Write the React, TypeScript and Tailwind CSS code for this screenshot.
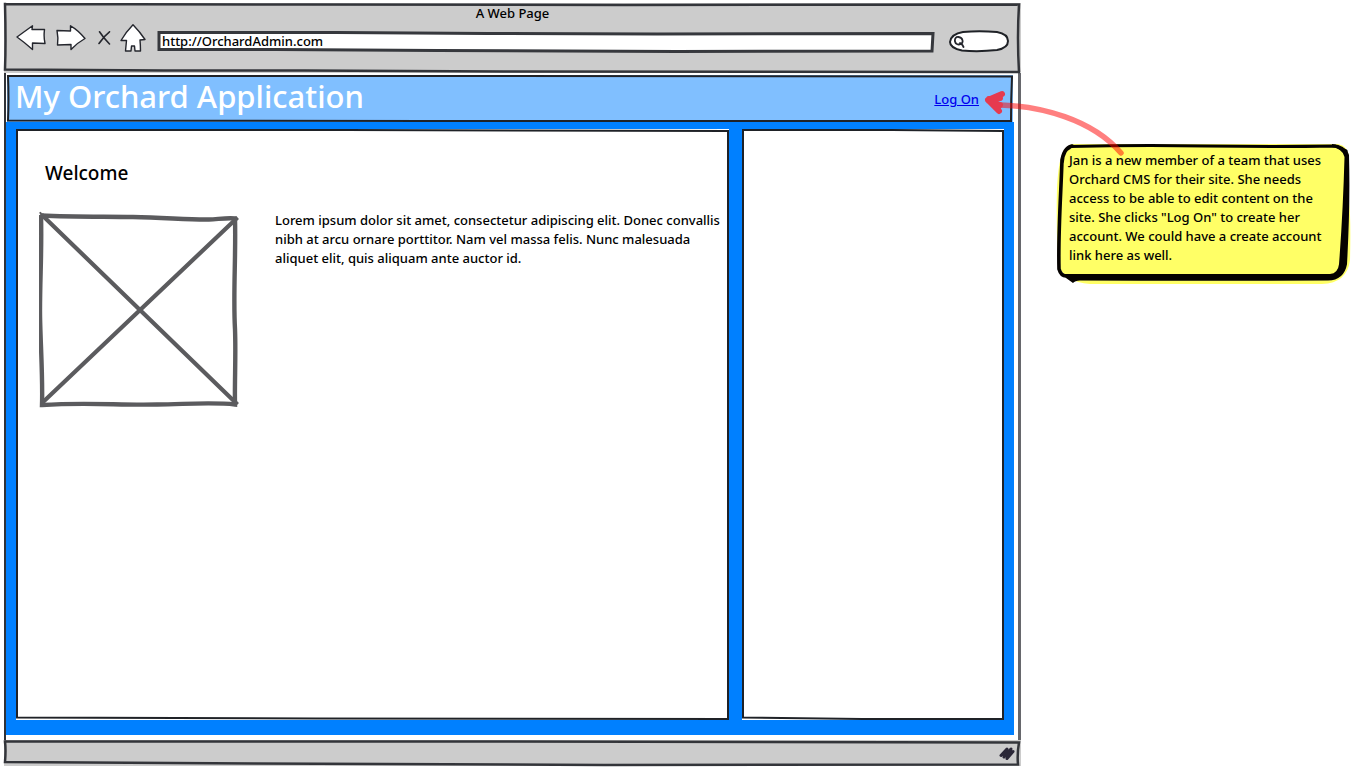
import React from "react";

const welcomeLines = [
  "Lorem ipsum dolor sit amet, consectetur adipiscing elit. Donec convallis",
  "nibh at arcu ornare porttitor. Nam vel massa felis. Nunc malesuada",
  "aliquet elit, quis aliquam ante auctor id.",
];

const noteLines = [
  "Jan is a new member of a team that uses",
  "Orchard CMS for their site. She needs",
  "access to be able to edit content on the",
  'site. She clicks "Log On" to create her',
  "account. We could have a create account",
  "link here as well.",
];

function Lines({ lines }: { lines: string[] }) {
  return (
    <>
      {lines.map((line) => (
        <span key={line} className="block whitespace-nowrap">
          {line}{" "}
        </span>
      ))}
    </>
  );
}

/* Hand-drawn outline stretched over its positioned parent. */
function Sketch({
  box,
  d,
  stroke = "#1f2227",
  width = 2,
  fill = "none",
}: {
  box: string;
  d: string;
  stroke?: string;
  width?: number;
  fill?: string;
}) {
  return (
    <svg
      viewBox={box}
      preserveAspectRatio="none"
      aria-hidden="true"
      className="pointer-events-none absolute inset-0 size-full overflow-visible"
    >
      <path
        d={d}
        fill={fill}
        stroke={stroke}
        strokeWidth={width}
        strokeLinecap="square"
        vectorEffect="non-scaling-stroke"
      />
    </svg>
  );
}

const toolbarStroke = {
  fill: "#fff",
  stroke: "#24262d",
  strokeWidth: 1.4,
  strokeLinejoin: "round" as const,
  strokeLinecap: "round" as const,
};

function BackIcon() {
  return (
    <svg width="30" height="28" viewBox="0 0 30 28" aria-hidden="true">
      <path d="M1 12 Q8 7 16.500 0.800 L16 4.500 L28.500 4.500 Q27.500 12 29 18.500 L16.500 18 L16.500 24.500 Q8 17 1 12Z" {...toolbarStroke} />
    </svg>
  );
}

function ForwardIcon() {
  return (
    <svg width="30" height="28" viewBox="0 0 30 28" aria-hidden="true">
      <path d="M1 5.500 L14.500 6 L14.500 0.800 Q22 5 29 13.500 Q21 18 15 24.500 L15 19.500 L1.500 20 Q2.500 13 1 5.500Z" {...toolbarStroke} />
    </svg>
  );
}

function StopIcon() {
  return (
    <svg width="14" height="16" viewBox="0 0 14 16" aria-hidden="true">
      <path d="M2.500 0.800 Q6.500 7 12.500 13 M12.500 0.800 Q7 5 2 12.500" {...toolbarStroke} fill="none" strokeWidth={1.6} />
    </svg>
  );
}

function HomeIcon() {
  return (
    <svg width="26" height="30" viewBox="0 0 26 30" aria-hidden="true">
      <path
        d="M13 0.800 Q20 8 25 15.500 L20 16 Q20.500 21 20.500 27 L15 27 L14.500 22 L11.500 22 L11 27 L5.500 27 L6.500 16.500 L1 16.500 Q6 8 13 0.800Z"
        {...toolbarStroke}
      />
    </svg>
  );
}

function SearchIcon() {
  return (
    <svg width="13" height="14" viewBox="0 0 13 14" aria-hidden="true" className="relative shrink-0">
      <path
        d="M6.500 3 C4 2.700 2.500 4.500 3 7.500 C3.500 10.500 6.500 11 9 10 C11.700 8.500 11 3.500 6.500 3Z M8 9 L10.500 11 L11.500 13"
        fill="none"
        stroke="#24262d"
        strokeWidth="1.8"
        strokeLinecap="round"
      />
    </svg>
  );
}

function ResizeGrip() {
  return (
    <svg width="17" height="16" viewBox="0 0 17 16" aria-hidden="true" className="relative">
      <path
        d="M2 10.500 L8 4 L5 12 L12 4 L8 13.500 L14 6.500"
        fill="none"
        stroke="#2b2838"
        strokeWidth="3"
        strokeLinecap="round"
        strokeLinejoin="round"
      />
    </svg>
  );
}

function ImagePlaceholder() {
  return (
    <svg width="202" height="197" viewBox="0 0 202 197" role="img" aria-label="Image placeholder" className="shrink-0">
      <g fill="none" stroke="#5b5b5e" strokeLinecap="square" strokeLinejoin="miter">
        <path d="M4 5 L197 192 M197 8 L4 191" strokeWidth="4.200" />
        <path
          d="M2 4.500 C35 6 65 5.500 94 6 C130 7 155 9 170 8.500 C180 8 190 6.500 196 7.500 C197 45 194 85 196 118 C197 145 195.500 170 196 193.500 C175 191 150 193 118 193.500 C80 194.500 50 191 3 194 C4 165 1 125 1 100 C1 65 3 40 2 4Z"
          strokeWidth="4.400"
        />
        <path d="M2 3 L1.500 2" strokeWidth="2" />
      </g>
    </svg>
  );
}

function NoteShape() {
  return (
    <svg
      viewBox="0 0 295 143"
      preserveAspectRatio="none"
      aria-hidden="true"
      className="absolute inset-0 size-full"
    >
      <path
        d="M16 1 H282 Q292 3 293 14 V60 Q295 75 294 118 Q291 141 266 142 H34 Q8 140 2 122 Q0 80 1 45 Q2 25 5 14 Q8 4 16 1Z"
        fill="#ffff66"
      />
      <path
        d="M6 20 Q7 5 16 3 M13 5 Q8 7 6 17 C5 50 2 90 3 127 Q5 134 10 134"
        fill="none"
        stroke="#050200"
        strokeWidth="3.600"
        strokeLinecap="round"
      />
      <path d="M14 3.500 Q80 2 150 3 T279 3 L290 8" fill="none" stroke="#050200" strokeWidth="3" strokeLinecap="round" />
      <path
        d="M276 1 Q290 2 293 12 C294 50 293 85 291 122 Q288 138 272 138.500 Q140 139 24 138.500 Q19 139 17 141 L10 136 L8 132 L274 132 Q282 131 283 122 Q287 70 288.500 14 Q287 6 276 4Z"
        fill="#050200"
      />
    </svg>
  );
}

function CalloutArrow() {
  return (
    <svg
      width="150"
      height="74"
      viewBox="0 0 150 74"
      aria-hidden="true"
      className="pointer-events-none absolute top-[86px] -left-[41px]"
    >
      <path
        d="M20 19 C60 20 112 33 141 67"
        fill="none"
        stroke="#ff0000"
        strokeOpacity="0.5"
        strokeWidth="5.500"
        strokeLinecap="round"
      />
      <path
        d="M22 8 L8 14 L19 25 M9 13 L20 12 M9 15 L20 19 M10 14 L20 10 M10 15 L18 22"
        fill="none"
        stroke="#e63a4f"
        strokeWidth="6"
        strokeLinecap="round"
        strokeLinejoin="round"
      />
    </svg>
  );
}

function Toolbar() {
  return (
    <div className="relative flex h-[70px] flex-col bg-[#cccccc]">
      <Sketch
        box="0 0 1017 70"
        d="M1 1 L300 1.500 L620 2 L1015 1.500 Q1013 35 1015 69 L1016 69 L500 68.500 L300 67.500 L160 67.500 L1 66.500 Q2 40 1 1"
        stroke="#33353a"
        width={2.5}
      />
      <p className="relative pt-[2px] text-center text-[13px] leading-4 font-medium">A Web Page</p>
      <div className="relative flex items-center pt-[3px] pr-[12px] pl-[12px]">
        <button type="button" aria-label="Back">
          <BackIcon />
        </button>
        <button type="button" aria-label="Forward" className="ml-[10px]">
          <ForwardIcon />
        </button>
        <button type="button" aria-label="Stop" className="ml-[11px]">
          <StopIcon />
        </button>
        <button type="button" aria-label="Home" className="ml-[9px]">
          <HomeIcon />
        </button>
        <div className="relative mt-[3px] ml-[11px] h-[22px] min-w-0 flex-1">
          <Sketch
            box="0 0 778 22"
            d="M2 2.500 L180 2.500 L330 3.500 L500 4 L776 3.500 L775 21 L520 21.500 L280 20.500 L120 19.500 L2 19.500Z"
            stroke="#36383d"
            width={3}
            fill="#fff"
          />
          <input
            type="text"
            aria-label="Address"
            defaultValue="http://OrchardAdmin.com"
            className="relative block h-[22px] w-full bg-transparent px-[5px] text-[13px] font-medium outline-none"
          />
        </div>
        <label className="relative mt-[3px] ml-[14px] flex h-[22px] w-[60px] items-center pl-[3px]">
          <Sketch
            box="0 0 60 22"
            d="M14 2 Q30 0.500 48 2 Q59 4 59 11 Q59 18 48 20 Q30 22 13 20.500 Q1 18 1 12 Q2 4 14 2Z"
            width={2}
            fill="#fff"
          />
          <SearchIcon />
          <input
            type="search"
            aria-label="Search"
            className="relative w-full min-w-0 bg-transparent text-[11px] outline-none"
          />
        </label>
      </div>
    </div>
  );
}

export default function App() {
  return (
    <div className="flex min-h-screen bg-white pl-1 font-['Noto_Sans',sans-serif] text-black">
      <div className="flex min-w-0 flex-1 flex-col pt-[3px] pb-[2px]">
        <Toolbar />

        <div className="flex flex-1 flex-col border-r-3 border-l-2 border-r-[#66676c] border-l-[#303237] pt-[2px] pr-1 pb-[5px]">
          <header className="relative mr-px ml-px flex h-[47px] items-center justify-between bg-[#80bfff] pr-[34px] pl-[8px]">
            <Sketch box="0 0 1005 47" d="M1 1 L400 1 L1004 1.500 Q1003 24 1003 46 L420 46 L1 45.500 Q2 24 1 1" />
            <h1 className="relative pb-[6px] text-[31px] leading-10 font-medium text-white">My Orchard Application</h1>
            <a href="#log-on" className="relative pt-[3px] text-[13px] font-medium text-[#0000ee] underline">
              Log On
            </a>
          </header>

          <div className="flex flex-1 gap-[13px] bg-[#0080ff] pt-[7px] pr-[10px] pb-[15px] pl-[10px]">
            <main className="relative min-w-0 flex-1 bg-white pt-[28px] pl-[23px]">
              <Sketch box="0 0 713 591" d="M1 1 L330 1 L712 2 L712 590 L300 589.500 L1 588.500 Q2 300 1 1" />
              <h2 className="relative pl-[6px] text-[19px] leading-8 font-medium">Welcome</h2>
              <div className="relative flex items-start pt-[22px]">
                <ImagePlaceholder />
                <p className="pl-[34px] text-[13px] leading-[19px] font-medium">
                  <Lines lines={welcomeLines} />
                </p>
              </div>
            </main>
            <aside className="relative w-[262px] shrink-0 bg-white" aria-label="Sidebar">
              <Sketch box="0 0 262 591" d="M1 1 L150 1 L261 2 L261 590 L120 590 L1 588.500 Q2 300 1 1" />
            </aside>
          </div>
        </div>

        <footer className="relative flex h-[26px] items-center justify-end bg-[#cccccc] pr-[5px]">
          <Sketch
            box="0 0 1017 26"
            d="M1 1.500 L500 1.500 L1015 2.500 Q1013 14 1014 24.500 L600 25 L250 23.500 L1 22 Q2 10 1 1.500"
            stroke="#33353a"
            width={2.5}
          />
          <ResizeGrip />
        </footer>
      </div>

      <aside className="relative w-[330px] shrink-0 pt-[143px] pl-[35px]" aria-label="Annotation">
        <div className="relative pt-2 pb-5 pl-[13px]">
          <NoteShape />
          <p className="relative text-[13px] leading-[19px] font-medium">
            <Lines lines={noteLines} />
          </p>
        </div>
        <CalloutArrow />
      </aside>
    </div>
  );
}
